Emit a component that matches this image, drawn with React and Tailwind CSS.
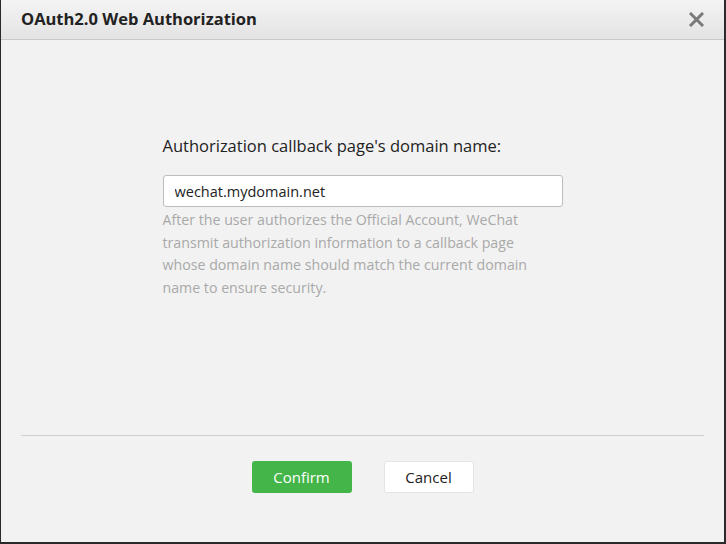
export default function App() {
  return (
    <div className="w-[726px] h-[544px] flex flex-col bg-[#f2f2f2] border-l border-r-2 border-b-2 border-[#2a2a2a] font-['Open_Sans','Noto_Sans',sans-serif] overflow-hidden">
      {/* Header */}
      <div className="h-[40px] shrink-0 flex items-center justify-between pl-[20px] pr-[20px] bg-gradient-to-b from-[#f4f4f4] to-[#e3e3e3] border-b border-[#c8c8c8]">
        <h1 className="text-[16.5px] font-bold text-[#222]">OAuth2.0 Web Authorization</h1>
        <button className="w-[16px] h-[16px] flex items-center justify-center">
          <svg width="15" height="15" viewBox="0 0 15 15">
            <path d="M2 2 L13 13 M13 2 L2 13" stroke="#7a7a7a" strokeWidth="3" strokeLinecap="square" />
          </svg>
        </button>
      </div>

      {/* Body */}
      <div className="flex-1 flex flex-col items-center pt-[95px]">
        <div className="w-[400px]">
          <label className="block text-[16.5px] text-[#222] leading-[22px]">
            Authorization callback page's domain name:
          </label>
          <input
            type="text"
            defaultValue="wechat.mydomain.net"
            className="mt-[18px] w-[400px] h-[32px] px-[11px] bg-white border border-[#bdbdbd] rounded-[3px] text-[14.5px] text-[#222] outline-none"
          />
          <p className="mt-[2px] text-[14.2px] leading-[22.7px] text-[#a9a9a9] whitespace-nowrap">
            After the user authorizes the Official Account, WeChat
            <br />
            transmit authorization information to a callback page
            <br />
            whose domain name should match the current domain
            <br />
            name to ensure security.
          </p>
        </div>
      </div>

      {/* Footer */}
      <div className="shrink-0 mx-[20px] border-t border-[#cfcfcf] h-[107px] flex justify-center gap-[32px] pt-[25px]">
        <button className="w-[100px] h-[32px] bg-[#44b549] text-white text-[15px] rounded-[3px]">Confirm</button>
        <button className="w-[90px] h-[32px] bg-white text-[#222] text-[15px] rounded-[3px] border border-[#e4e4e4]">Cancel</button>
      </div>
    </div>
  );
}
